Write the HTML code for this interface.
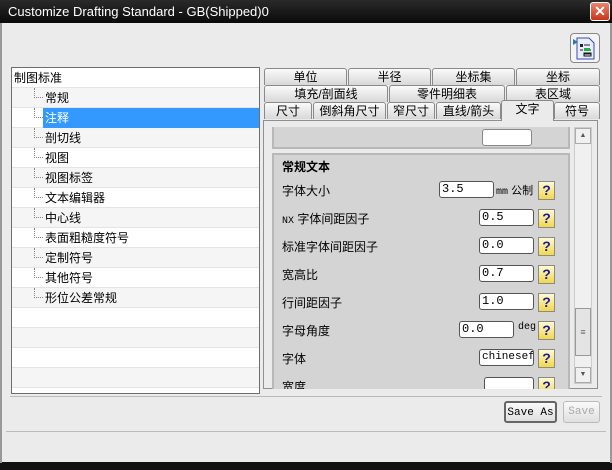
<!DOCTYPE html>
<html><head><meta charset="utf-8"><style>
*{box-sizing:border-box;margin:0;padding:0}
body{width:612px;height:470px;background:#ebebeb;font-family:"Liberation Sans","Noto Sans CJK SC",sans-serif;font-size:12px;color:#000;position:relative;overflow:hidden}
.abs{position:absolute}
.title{left:0;top:0;width:612px;height:23px;background:linear-gradient(#2a2a2a,#0a0a0a);color:#fff;font-size:13px;line-height:23px;padding-left:8px}
.close{right:2px;top:2px;width:20px;height:19px;background:linear-gradient(#e8856e,#c8361c);border:1px solid #fff;border-radius:3px;color:#fff;font-weight:bold;text-align:center;line-height:17px;font-size:14px}
.tree{left:11px;top:67px;width:249px;height:327px;background:#fff;border:1px solid #6e6e6e}
.row{position:absolute;left:0;width:247px;height:20px;border-bottom:1px solid #e4e4e4;line-height:20px;font-size:12px}
.row:nth-child(even){background:#f5f5f5}
.row i{position:absolute;left:22px;top:0;width:9px;height:10px;border-left:1px dotted #888;border-bottom:1px dotted #888}
.row span{position:absolute;left:33px;top:0}
.tab{position:absolute;height:17px;border:1px solid #8a8a8a;border-bottom:none;border-radius:3px 3px 0 0;background:linear-gradient(#fafafa,#d8d8d8);text-align:center;font-size:12px;line-height:16px}
.content{left:263px;top:120px;width:335px;height:269px;border:1px solid #8f8f8f;background:#ebebeb}
.grp{position:absolute;left:8px;width:298px;background:#d4d4d4;border:2px solid #b8b8b8}
.lbl{position:absolute;left:8px;font-size:12px}
.inp{position:absolute;height:17px;background:#fff;border:1px solid #555;border-radius:3px;font-family:"Liberation Mono",monospace;font-size:12px;line-height:15px;padding-left:2px}
.q{position:absolute;left:264px;width:17px;height:19px;background:linear-gradient(#fffbd0,#f2d84a);border:1px solid #8a8a8a;color:#1a1aa0;font-weight:bold;font-size:14px;text-align:center;line-height:17px}
.btn{position:absolute;height:22px;border:1px solid #777;border-radius:3px;background:linear-gradient(#fafafa,#e0e0e0);font-family:"Liberation Mono",monospace;font-size:11px;text-align:center;line-height:20px}
</style></head><body>
<div class="abs title">Customize Drafting Standard - GB(Shipped)0</div>
<div class="abs close">✕</div>
<div class="abs" style="left:570px;top:33px;width:30px;height:30px;border:1px solid #888;border-radius:4px;background:#f4f4f4">
<svg width="28" height="28" viewBox="0 0 28 28"><path d="M6 4h12l5 5v16H6z" fill="#e8eeff" stroke="#3a4ab0"/><path d="M2 5l5 3-5 3z" fill="#2a7ab8"/><rect x="9" y="10" width="3" height="3" fill="#222"/><path d="M13 11h6M9 16h3M13 16h7M13 20h7" stroke="#222"/><rect x="13" y="14" width="6" height="3" fill="#22b040"/><rect x="13" y="19" width="7" height="3" fill="none" stroke="#111"/></svg></div>
<div class="abs tree">
<div class="row" style="top:0;padding-left:2px">制图标准</div>
<div class="row" style="top:20px"><i></i><span>常规</span></div>
<div class="row" style="top:40px;background:#fff"><i></i><span style="left:31px;background:#3399ff;color:#fff;width:216px;padding-left:2px">注释</span></div>
<div class="row" style="top:60px"><i></i><span>剖切线</span></div>
<div class="row" style="top:80px"><i></i><span>视图</span></div>
<div class="row" style="top:100px"><i></i><span>视图标签</span></div>
<div class="row" style="top:120px"><i></i><span>文本编辑器</span></div>
<div class="row" style="top:140px"><i></i><span>中心线</span></div>
<div class="row" style="top:160px"><i></i><span>表面粗糙度符号</span></div>
<div class="row" style="top:180px"><i></i><span>定制符号</span></div>
<div class="row" style="top:200px"><i></i><span>其他符号</span></div>
<div class="row" style="top:220px"><i></i><span>形位公差常规</span></div>
<div class="row" style="top:240px"></div><div class="row" style="top:260px"></div><div class="row" style="top:280px"></div><div class="row" style="top:300px"></div>
</div>
<div class="tab" style="left:264px;top:68px;width:83px">单位</div>
<div class="tab" style="left:348px;top:68px;width:83px">半径</div>
<div class="tab" style="left:432px;top:68px;width:83px">坐标集</div>
<div class="tab" style="left:516px;top:68px;width:84px">坐标</div>
<div class="tab" style="left:264px;top:85px;width:124px">填充/剖面线</div>
<div class="tab" style="left:389px;top:85px;width:116px">零件明细表</div>
<div class="tab" style="left:506px;top:85px;width:94px">表区域</div>
<div class="tab" style="left:264px;top:102px;width:48px">尺寸</div>
<div class="tab" style="left:313px;top:102px;width:73px">倒斜角尺寸</div>
<div class="tab" style="left:387px;top:102px;width:48px">窄尺寸</div>
<div class="tab" style="left:436px;top:102px;width:65px">直线/箭头</div>
<div class="tab" style="left:501px;top:100px;width:53px;height:21px;background:#ebebeb;z-index:2">文字</div>
<div class="tab" style="left:554px;top:102px;width:46px">符号</div>
<div class="abs content">
<div class="grp" style="top:6px;height:22px;border-top:none"><div class="inp" style="left:208px;top:2px;width:50px;border-color:#888"></div></div>
<div class="grp" style="top:32px;height:236px;border-bottom:none;overflow:hidden">
<div class="lbl" style="top:3px;font-weight:bold">常规文本</div>
<div class="lbl" style="top:27px">字体大小</div><div class="inp" style="left:165px;top:26px;width:55px">3.5</div><div class="abs" style="left:222px;top:27px;font-size:11px"><span style="font-family:Liberation Mono;font-size:10px">mm</span> 公制</div><div class="q" style="top:26px">?</div>
<div class="lbl" style="top:55px"><span style="font-family:Liberation Mono;font-size:10px">NX</span> 字体间距因子</div><div class="inp" style="left:205px;top:54px;width:55px">0.5</div><div class="q" style="top:54px">?</div>
<div class="lbl" style="top:83px">标准字体间距因子</div><div class="inp" style="left:205px;top:82px;width:55px">0.0</div><div class="q" style="top:82px">?</div>
<div class="lbl" style="top:111px">宽高比</div><div class="inp" style="left:205px;top:110px;width:55px">0.7</div><div class="q" style="top:110px">?</div>
<div class="lbl" style="top:139px">行间距因子</div><div class="inp" style="left:205px;top:138px;width:55px">1.0</div><div class="q" style="top:138px">?</div>
<div class="lbl" style="top:167px">字母角度</div><div class="inp" style="left:185px;top:166px;width:55px">0.0</div><div class="abs" style="left:244px;top:167px;font-family:Liberation Mono;font-size:10px">deg</div><div class="q" style="top:166px">?</div>
<div class="lbl" style="top:195px">字体</div><div class="inp" style="left:205px;top:194px;width:55px;font-size:11px;overflow:hidden">chinesef_</div><div class="q" style="top:194px">?</div>
<div class="lbl" style="top:223px">宽度</div><div class="inp" style="left:210px;top:222px;width:50px"></div><div class="q" style="top:222px">?</div>
</div>
<div class="abs" style="left:310px;top:6px;width:18px;height:257px;background:#f0f0f0;border:1px solid #ccc">
<div class="abs" style="left:0;top:0;width:16px;height:16px;border:1px solid #aaa;font-size:7px;text-align:center;line-height:14px;color:#555">▲</div>
<div class="abs" style="left:0;top:180px;width:16px;height:48px;border:1px solid #999;background:#e4e4e4;text-align:center;line-height:46px;font-size:9px;color:#666">≡</div>
<div class="abs" style="left:0;top:239px;width:16px;height:16px;border:1px solid #aaa;font-size:7px;text-align:center;line-height:14px;color:#555">▼</div>
</div>
</div>
<div class="abs" style="left:10px;top:396px;width:592px;border-top:1px solid #bbb"></div>
<div class="btn" style="left:504px;top:401px;width:53px;border:2px solid #666">Save As</div>
<div class="btn" style="left:563px;top:401px;width:37px;color:#aaa;border-color:#bbb">Save</div>
<div class="abs" style="left:6px;top:431px;width:600px;border-top:1px solid #bbb"></div>
<div class="abs" style="left:0;top:462px;width:612px;height:8px;background:#111"></div>
<div class="abs" style="left:0;top:23px;width:2px;height:440px;background:#999"></div>
<div class="abs" style="right:0;top:23px;width:2px;height:440px;background:#999"></div>
</body></html>
